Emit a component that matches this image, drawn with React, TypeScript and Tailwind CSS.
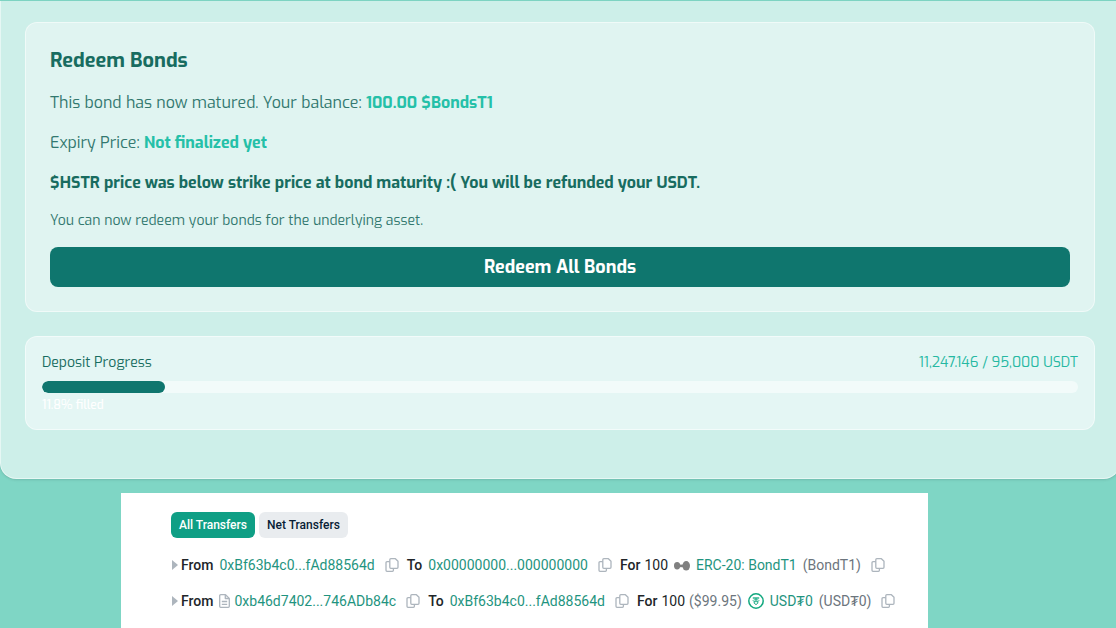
import type { ReactNode } from "react";

type Transfer = {
  from: string;
  fromIsContract: boolean;
  to: string;
  amount: string;
  usd: string | null;
  token: string;
  symbol: string;
  icon: "bond" | "usdt";
};

const transfers: Transfer[] = [
  {
    from: "0xBf63b4c0...fAd88564d",
    fromIsContract: false,
    to: "0x00000000...000000000",
    amount: "100",
    usd: null,
    token: "ERC-20: BondT1",
    symbol: "(BondT1)",
    icon: "bond",
  },
  {
    from: "0xb46d7402...746ADb84c",
    fromIsContract: true,
    to: "0xBf63b4c0...fAd88564d",
    amount: "100",
    usd: "($99.95)",
    token: "USD₮0",
    symbol: "(USD₮0)",
    icon: "usdt",
  },
];

function CopyButton({ label }: { label: string }) {
  return (
    <button type="button" aria-label={label} className="shrink-0 text-[#adb5bd]">
      <svg width="14" height="14" viewBox="0 0 14 14" fill="none" stroke="currentColor" strokeWidth="1.3" strokeLinejoin="round">
        <path d="M5.8 0.7h4.6l2.6 2.6v6a1 1 0 0 1-1 1H5.8a1 1 0 0 1-1-1V1.7a1 1 0 0 1 1-1z" />
        <path d="M4.8 3.7H2a1 1 0 0 0-1 1v7.6a1 1 0 0 0 1 1h5.4a1 1 0 0 0 1-1v-2" />
      </svg>
    </button>
  );
}

function ContractIcon() {
  return (
    <svg width="11" height="14" viewBox="0 0 11 14" fill="none" stroke="#adb5bd" strokeWidth="1.3" strokeLinejoin="round" className="shrink-0">
      <path d="M1.7 0.7h4.8l3.8 3.7v7.9a1 1 0 0 1-1 1H1.7a1 1 0 0 1-1-1V1.7a1 1 0 0 1 1-1z" />
      <path d="M6.3 0.9v3.6h3.8M2.8 7.5h5.4M2.8 10.3h5.4" />
    </svg>
  );
}

function TokenIcon({ icon }: { icon: Transfer["icon"] }) {
  if (icon === "bond") {
    return (
      <svg width="16" height="16" viewBox="0 0 16 16" fill="#808080" className="shrink-0">
        <ellipse cx="3.1" cy="8.8" rx="3.1" ry="3.7" />
        <ellipse cx="12.2" cy="8.8" rx="3.8" ry="4.8" />
        <path d="M5 7.6h5v2.6H5z" />
      </svg>
    );
  }
  return (
    <svg width="16" height="16" viewBox="0 0 16 16" fill="none" stroke="#12a87f" className="shrink-0">
      <circle cx="8" cy="8" r="7.2" strokeWidth="1.5" />
      <path d="M4.8 5h6.4" strokeWidth="1.3" />
      <ellipse cx="8" cy="7.7" rx="3" ry="1" strokeWidth="0.8" />
      <path d="M6.2 8.8v1.4L8 11.6l1.8-1.4V8.8M8 5v3.4" strokeWidth="1" />
    </svg>
  );
}

function Address({ children }: { children: ReactNode }) {
  return (
    <a href="#" className="text-[#1f9480]">
      {children}
    </a>
  );
}

function TransferRow({ transfer }: { transfer: Transfer }) {
  return (
    <li className="flex items-center whitespace-nowrap text-sm text-[#212529]">
      <span className="mr-[3px] ml-px h-0 w-0 border-y-[5px] border-l-[6px] border-y-transparent border-l-[#adb5bd]" />
      <span className="mr-1.5 font-medium">From</span>
      {transfer.fromIsContract && (
        <span className="mr-1">
          <ContractIcon />
        </span>
      )}
      <Address>{transfer.from}</Address>
      <span className="mr-2 ml-2.5 flex">
        <CopyButton label="Copy sender address" />
      </span>
      <span className="mr-1.5 font-medium">To</span>
      <Address>{transfer.to}</Address>
      <span className="mr-2 ml-2.5 flex">
        <CopyButton label="Copy receiver address" />
      </span>
      <span className="mr-1 font-medium">For</span>
      <span>{transfer.amount}</span>
      {transfer.usd && <span className="ml-1 text-[#6c757d]">{transfer.usd}</span>}
      <span className="mx-1.5 flex">
        <TokenIcon icon={transfer.icon} />
      </span>
      <Address>{transfer.token}</Address>
      <span className="ml-1.5 text-[#6c757d]">{transfer.symbol}</span>
      <span className="ml-2.5 flex">
        <CopyButton label="Copy token address" />
      </span>
    </li>
  );
}

function RedeemCard() {
  return (
    <section className="rounded-xl border border-white/50 bg-[#e0f4f1] p-6 text-base text-[#32786f]">
      <h2 className="text-xl font-bold text-[#186c60]">Redeem Bonds</h2>
      <p className="mt-4">
        This bond has now matured. Your balance: <span className="font-bold text-[#25c0a8]">100.00 $BondsT1</span>
      </p>
      <p className="mt-4">
        Expiry Price: <span className="font-bold text-[#25c0a8]">Not finalized yet</span>
      </p>
      <p className="mt-4 font-bold text-[#186c60]">
        $HSTR price was below strike price at bond maturity :( You will be refunded your USDT.
      </p>
      <p className="mt-4 text-sm">You can now redeem your bonds for the underlying asset.</p>
      <button type="button" className="mt-4 h-10 w-full rounded-lg bg-[#0f766e] text-lg font-bold text-white">
        Redeem All Bonds
      </button>
    </section>
  );
}

function DepositProgress({ deposited, cap }: { deposited: number; cap: number }) {
  const percent = (deposited / cap) * 100;

  return (
    <section className="mt-6 rounded-xl border border-white/50 bg-[#e4f6f4] p-4">
      <div className="mb-2 flex justify-between text-sm">
        <span className="text-[#186c60]">Deposit Progress</span>
        <span className="text-[#25b8a2]">
          {deposited.toLocaleString("en-US")} / {cap.toLocaleString("en-US")} USDT
        </span>
      </div>
      <div className="h-3 overflow-hidden rounded-full bg-[#f2fbfa]">
        <div className="h-full rounded-full bg-[#0f766e]" style={{ width: `${percent}%` }} />
      </div>
      <p className="mt-1 text-xs font-medium text-white">{percent.toFixed(1)}% filled</p>
    </section>
  );
}

export default function App() {
  return (
    <div className="flex min-h-screen flex-col overflow-hidden bg-[#7fd6c5] pt-px">
      <main className="-mr-1 rounded-b-2xl border border-t-0 border-white/50 bg-[#cdefe9] px-6 pt-[21px] pb-12 font-[Exo,'Exo_2','Open_Sans',sans-serif] shadow-sm">
        <RedeemCard />
        <DepositProgress deposited={11247.146} cap={95000} />
      </main>

      <section className="mt-3.5 mr-[188px] ml-[121px] grow bg-white pt-[19px] pr-6 pb-4 pl-[50px] font-[Roboto,sans-serif]">
        <div className="flex gap-1 text-xs font-medium">
          <button type="button" className="h-[26px] rounded-md bg-[#0f9f85] px-2 text-white">
            All Transfers
          </button>
          <button type="button" className="h-[26px] rounded-md bg-[#e9ecef] px-2 text-[#081d35]">
            Net Transfers
          </button>
        </div>
        <ul className="mt-[17px] space-y-4">
          {transfers.map((t) => (
            <TransferRow key={t.from} transfer={t} />
          ))}
        </ul>
      </section>
    </div>
  );
}
